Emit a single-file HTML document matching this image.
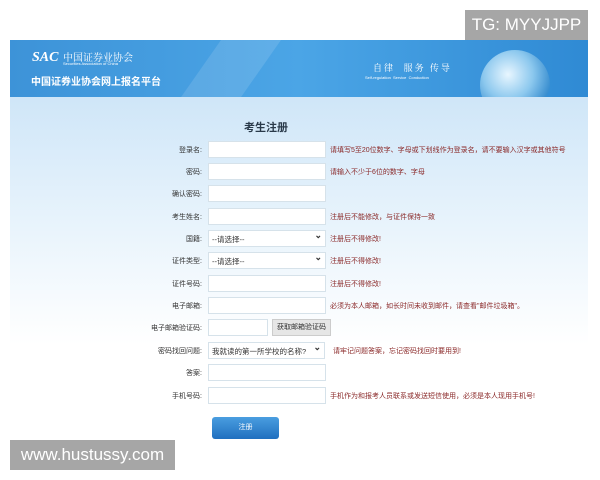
<!DOCTYPE html>
<html><head><meta charset="utf-8"><style>
*{margin:0;padding:0;box-sizing:border-box}
body{width:600px;height:480px;background:#fff;position:relative;overflow:hidden;font-family:"Liberation Sans","Noto Sans CJK SC",sans-serif}
.hdr{position:absolute;left:10px;top:40px;width:578px;height:57px;background:linear-gradient(90deg,#3d93d8,#4ba5e6 50%,#2f8ad4);overflow:hidden}
.hdr .sh{position:absolute;left:190px;top:-20px;width:60px;height:100px;background:rgba(255,255,255,.12);transform:skewX(-35deg)}
.globe{position:absolute;left:470px;top:10px;width:70px;height:70px;border-radius:50%;background:radial-gradient(circle at 40% 35%,#e8f6ff,#8cc8ee 40%,#3a8fd0 70%,rgba(58,143,208,0) 72%)}
.body{position:absolute;left:10px;top:97px;width:578px;height:330px;background:linear-gradient(180deg,#cfe6f8,#e9f4fc 40%,#fff 75%)}
.t{position:absolute;color:#fff;white-space:nowrap}
.wm{position:absolute;background:#a6a6a6;color:#fff;font-size:17px;display:flex;align-items:center;justify-content:center}
.lab{position:absolute;width:100px;text-align:right;font-size:7px;color:#333;left:102px}
.in{position:absolute;left:208px;width:118px;height:17px;background:#fff;border:1px solid #d6e2ea}
.hint{position:absolute;left:330px;font-size:7px;color:#8b2a2a;white-space:nowrap}
.sel{font-size:7.5px;color:#333;padding:3px 3px;}
.sel:after{content:"⌄";position:absolute;right:3px;top:0px;font-size:9px;font-weight:bold;line-height:9px}
</style></head><body>
<div class="wm" style="left:465px;top:10px;width:123px;height:30px">TG: MYYJJPP</div>
<div class="hdr"><div class="sh"></div><div class="globe"></div>
<div class="t" style="left:22px;top:10px;font:italic bold 14px 'Liberation Serif',serif">SAC</div>
<div class="t" style="left:53px;top:9px;font-size:10px;font-family:'Noto Serif CJK SC',serif">中国证券业协会</div>
<div class="t" style="left:53px;top:21px;font-size:4px">Securities Association of China</div>
<div class="t" style="left:21px;top:33px;font-size:10px;font-weight:bold">中国证券业协会网上报名平台</div>
<div class="t" style="left:363px;top:21px;font-size:9px;font-family:'Noto Serif CJK SC',serif;letter-spacing:2px">自律 &nbsp;服务 传导</div>
<div class="t" style="left:355px;top:35px;font-size:4px">Self-regulation &nbsp;Service &nbsp;Conduction</div>
</div>
<div class="body"></div>
<div style="position:absolute;left:244px;top:119px;font-size:11px;font-weight:bold;color:#2a3a4a">考生注册</div>

<div class="lab" style="top:145px">登录名:</div><div class="in" style="top:141px"></div><div class="hint" style="top:145px">请填写5至20位数字、字母或下划线作为登录名，请不要输入汉字或其他符号</div>
<div class="lab" style="top:167px">密码:</div><div class="in" style="top:163px"></div><div class="hint" style="top:167px">请输入不少于6位的数字、字母</div>
<div class="lab" style="top:189px">确认密码:</div><div class="in" style="top:185px"></div>
<div class="lab" style="top:212px">考生姓名:</div><div class="in" style="top:208px"></div><div class="hint" style="top:212px">注册后不能修改，与证件保持一致</div>
<div class="lab" style="top:234px">国籍:</div><div class="in sel" style="top:230px">--请选择--</div><div class="hint" style="top:234px">注册后不得修改!</div>
<div class="lab" style="top:256px">证件类型:</div><div class="in sel" style="top:252px">--请选择--</div><div class="hint" style="top:256px">注册后不得修改!</div>
<div class="lab" style="top:279px">证件号码:</div><div class="in" style="top:275px"></div><div class="hint" style="top:279px">注册后不得修改!</div>
<div class="lab" style="top:301px">电子邮箱:</div><div class="in" style="top:297px"></div><div class="hint" style="top:301px">必须为本人邮箱，如长时间未收到邮件，请查看"邮件垃圾箱"。</div>
<div class="lab" style="top:323px">电子邮箱验证码:</div><div class="in" style="top:319px;width:60px"></div>
<div style="position:absolute;left:272px;top:319px;width:59px;height:17px;background:#e6e6e6;border:1px solid #ccc;font-size:7px;color:#333;text-align:center;line-height:15px">获取邮箱验证码</div>
<div class="lab" style="top:346px">密码找回问题:</div><div class="in sel" style="top:342px;width:117px">我就读的第一所学校的名称?</div><div class="hint" style="top:346px;left:333px">请牢记问题答案，忘记密码找回时要用到!</div>
<div class="lab" style="top:368px">答案:</div><div class="in" style="top:364px"></div>
<div class="lab" style="top:391px">手机号码:</div><div class="in" style="top:387px"></div><div class="hint" style="top:391px">手机作为和报考人员联系或发送短信使用，必须是本人现用手机号!</div>
<div style="position:absolute;left:212px;top:417px;width:67px;height:22px;border-radius:3px;background:linear-gradient(#4a9ee0,#1f6fbf);color:#fff;font-size:7px;text-align:center;line-height:22px">注册</div>
<div class="wm" style="left:10px;top:440px;width:165px;height:30px">www.hustussy.com</div>
</body></html>
